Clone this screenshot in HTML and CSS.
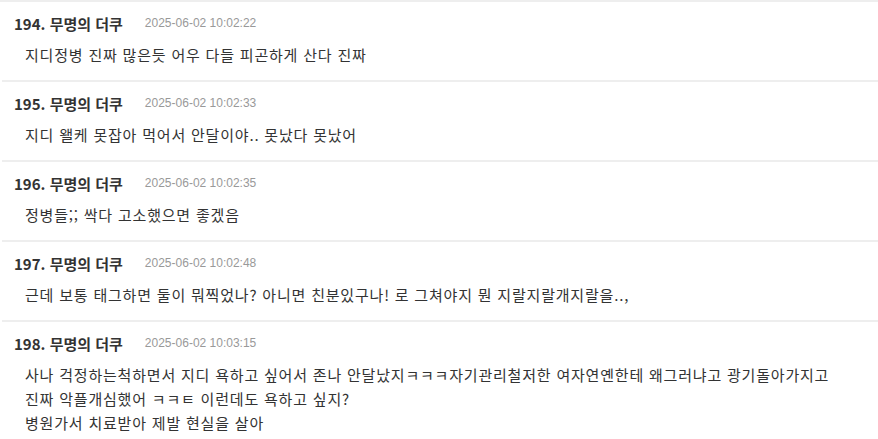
FILE: index.html
```html
<!DOCTYPE html>
<html lang="ko">
<head>
    <meta charset="UTF-8">
    <title>댓글</title>
    <link rel="stylesheet" href="styles.css">
</head>
<body>
    <ul class="comments">
        <li class="comment">
            <div class="meta"><span class="author">194. 무명의 더쿠</span><span class="date">2025-06-02 10:02:22</span></div>
            <p class="text">지디정병 진짜 많은듯 어우 다들 피곤하게 산다 진짜</p>
        </li>
        <li class="comment">
            <div class="meta"><span class="author">195. 무명의 더쿠</span><span class="date">2025-06-02 10:02:33</span></div>
            <p class="text">지디 왤케 못잡아 먹어서 안달이야.. 못났다 못났어</p>
        </li>
        <li class="comment">
            <div class="meta"><span class="author">196. 무명의 더쿠</span><span class="date">2025-06-02 10:02:35</span></div>
            <p class="text">정병들;; 싹다 고소했으면 좋겠음</p>
        </li>
        <li class="comment">
            <div class="meta"><span class="author">197. 무명의 더쿠</span><span class="date">2025-06-02 10:02:48</span></div>
            <p class="text">근데 보통 태그하면 둘이 뭐찍었나? 아니면 친분있구나! 로 그쳐야지 뭔 지랄지랄개지랄을..,</p>
        </li>
        <li class="comment">
            <div class="meta"><span class="author">198. 무명의 더쿠</span><span class="date">2025-06-02 10:03:15</span></div>
            <p class="text">사나 걱정하는척하면서 지디 욕하고 싶어서 존나 안달났지ㅋㅋㅋ자기관리철저한 여자연옌한테 왜그러냐고 광기돌아가지고<br>진짜 악플개심했어 ㅋㅋㅌ 이런데도 욕하고 싶지?<br>병원가서 치료받아 제발 현실을 살아</p>
        </li>
    </ul>
</body>
</html>
```

FILE: styles.css
```css
* {
    margin: 0;
    padding: 0;
    box-sizing: border-box;
}

body {
    background-color: #ffffff;
    font-family: "Noto Sans CJK KR", "Noto Sans", sans-serif;
    color: #333333;
}

.comments {
    list-style: none;
    padding-left: 2px;
    border-top: 2px solid #eeeeee;
}

.comment {
    padding: 11px 0 13px 12px;
    border-bottom: 2px solid #eeeeee;
}

.meta {
    display: flex;
    align-items: center;
    gap: 22px;
    height: 20px;
}

.author {
    font-size: 15px;
    font-weight: 700;
}

.date {
    font-family: "Liberation Sans", sans-serif;
    font-size: 12px;
    color: #999999;
}

.text {
    margin-top: 10px;
    padding-left: 11px;
    font-size: 15px;
    letter-spacing: 0.8px;
    line-height: 24px;
}
```
